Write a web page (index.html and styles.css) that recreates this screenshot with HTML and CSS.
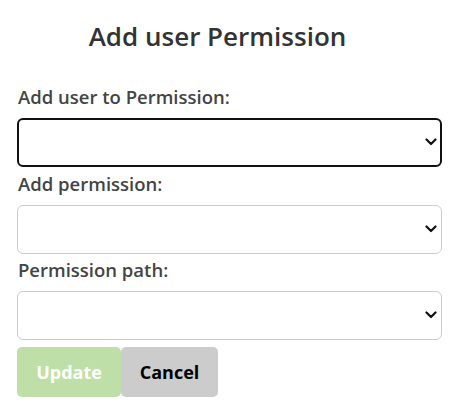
FILE: index.html
```html
<!DOCTYPE html>
<html lang="en">
<head>
<meta charset="utf-8">
<title>Add user Permission</title>
<link rel="stylesheet" href="styles.css">
</head>
<body>
<form class="form">
  <h2 class="title">Add user Permission</h2>
  <div class="field">
    <label class="label" for="user">Add user to Permission:</label>
    <div class="select-wrap">
      <select id="user" class="select select-focus"><option></option></select>
      <svg class="chev" width="12" height="8" viewBox="0 0 12 8"><path d="M1.5 1.5 L6 6 L10.5 1.5" fill="none" stroke="#111" stroke-width="2.2" stroke-linecap="round" stroke-linejoin="round"/></svg>
    </div>
  </div>
  <div class="field">
    <label class="label" for="perm">Add permission:</label>
    <div class="select-wrap">
      <select id="perm" class="select"><option></option></select>
      <svg class="chev" width="12" height="8" viewBox="0 0 12 8"><path d="M1.5 1.5 L6 6 L10.5 1.5" fill="none" stroke="#111" stroke-width="2.2" stroke-linecap="round" stroke-linejoin="round"/></svg>
    </div>
  </div>
  <div class="field">
    <label class="label" for="path">Permission path:</label>
    <div class="select-wrap">
      <select id="path" class="select"><option></option></select>
      <svg class="chev" width="12" height="8" viewBox="0 0 12 8"><path d="M1.5 1.5 L6 6 L10.5 1.5" fill="none" stroke="#111" stroke-width="2.2" stroke-linecap="round" stroke-linejoin="round"/></svg>
    </div>
  </div>
  <div class="actions">
    <button type="button" class="btn btn-update">Update</button>
    <button type="button" class="btn btn-cancel">Cancel</button>
  </div>
</form>
</body>
</html>
```
FILE: styles.css
```css
html, body {
  margin: 0;
  padding: 0;
  background: #fff;
}
body {
  font-family: "Open Sans", "Noto Sans", sans-serif;
}
.form {
  width: 425px;
  padding: 16px 0 0 17px;
  margin: 0;
}
.title {
  margin: 0 0 29px 0;
  padding-right: 24px;
  text-align: center;
  font-size: 26px;
  line-height: 40px;
  font-weight: 600;
  color: #333;
}
.field {
  padding-top: 4.6px;
}
.field:first-of-type {
  padding-top: 0;
}
.label {
  display: block;
  font-size: 18.5px;
  line-height: 24px;
  font-weight: 600;
  color: #444;
  margin-bottom: 9px;
  padding-left: 1px;
}
.select-wrap {
  position: relative;
  height: 49px;
}
.select {
  appearance: none;
  -webkit-appearance: none;
  display: block;
  box-sizing: border-box;
  width: 425px;
  height: 49px;
  margin: 0;
  border: 1px solid #ccc;
  border-radius: 6px;
  background: #fff;
  font-family: inherit;
  font-size: 16px;
}
.select-focus {
  border: 2px solid #111;
}
.chev {
  position: absolute;
  right: 5px;
  top: 20px;
  pointer-events: none;
}
.actions {
  display: flex;
  margin-top: 7px;
}
.btn {
  height: 50px;
  border: none;
  border-radius: 5px;
  font-family: inherit;
  font-size: 18px;
  font-weight: 700;
  padding: 0 18px;
}
.btn-update {
  width: 104px;
  background: #bfdfa8;
  color: #fff;
}
.btn-cancel {
  width: 97px;
  background: #cccccc;
  color: #000;
}
```
